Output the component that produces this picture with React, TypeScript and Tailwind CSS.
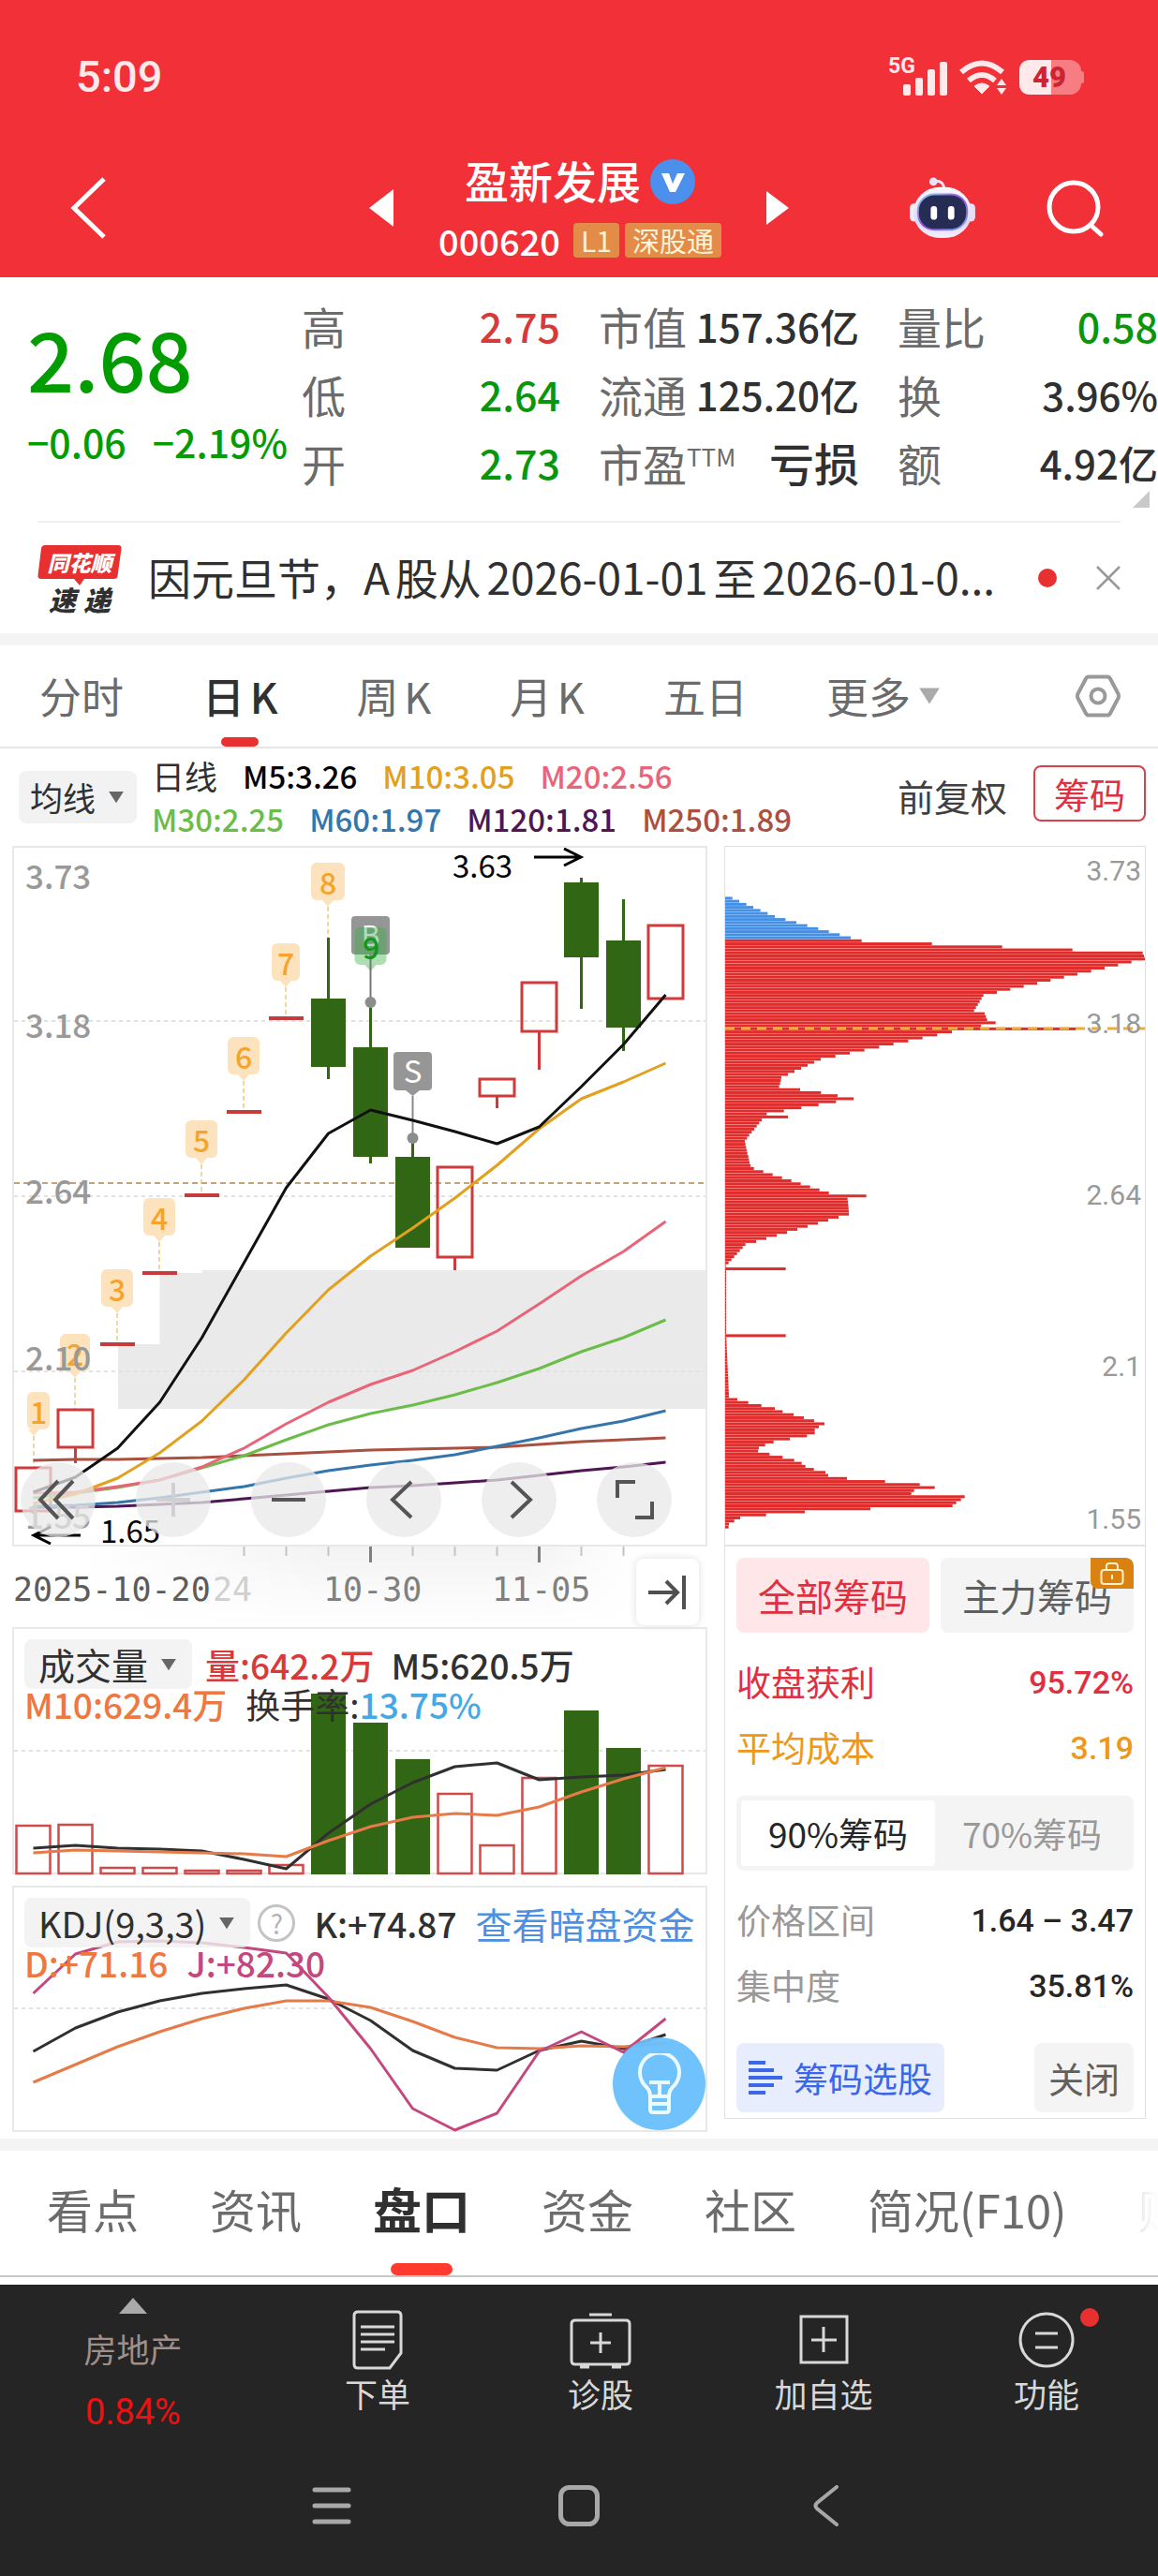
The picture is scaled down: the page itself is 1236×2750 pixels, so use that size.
import type { ReactNode } from "react";

/* ---------- shared helpers ---------- */

const candleX = (i: number) => 35.5 + 45 * i;

const linePoints = (ys: number[]) => ys.map((y, i) => `${candleX(i)},${y}`).join(" ");

function Caret({ className }: { className: string }) {
  return (
    <svg viewBox="0 0 20 16" className={className} aria-hidden="true">
      <path d="M1 1h18l-9 14z" fill="currentColor" />
    </svg>
  );
}

function SeriesLine({ ys, color, width = 3 }: { ys: number[]; color: string; width?: number }) {
  return <polyline points={linePoints(ys)} fill="none" stroke={color} strokeWidth={width} strokeLinejoin="round" />;
}

/* ---------- header ---------- */

function StatusBar() {
  return (
    <div className="flex h-16 items-center justify-between pr-[79px] pl-[81px] text-[#ffe9ea]">
      <span className="font-['Roboto',sans-serif] text-[47px] leading-[48px] font-medium">5:09</span>
      <div className="flex items-center gap-3">
        <svg viewBox="950 58 63 44" className="h-11 w-[63px]" aria-label="5G">
          <text x="950" y="76" fontSize="23" fontWeight="700" fill="currentColor" fontFamily="Roboto, sans-serif">5G</text>
          <g fill="currentColor">
            <rect x="966" y="88" width="8" height="12" rx="2" />
            <rect x="979" y="81" width="8" height="19" rx="2" />
            <rect x="992" y="72" width="8" height="28" rx="2" />
            <rect x="1005" y="64" width="8" height="36" rx="2" />
          </g>
        </svg>
        <svg viewBox="1025 60 52 44" className="h-11 w-[52px]" aria-label="Wi-Fi">
          <g fill="none" stroke="currentColor" strokeWidth="6">
            <path d="M1028 77q22 -19 44 0" />
            <path d="M1036 86q14 -12 28 0" />
          </g>
          <path d="M1042 92q8 -6 16 0l-8 8z" fill="currentColor" stroke="currentColor" strokeLinejoin="round" />
          <path d="M1071 84l5 7h-10zM1071 101l5 -7h-10z" fill="currentColor" />
        </svg>
        <svg viewBox="1087 60 70 44" className="h-11 w-[70px]" aria-label="49%">
          <rect x="1088" y="64" width="66" height="37" rx="12" fill="#f87d82" />
          <rect x="1153" y="76" width="4" height="13" rx="2" fill="#f87d82" />
          <path d="M1100 64h22v37h-22q-12 0 -12 -12v-13q0 -12 12 -12z" fill="currentColor" />
          <text x="1120" y="93" textAnchor="middle" fontSize="31" fontWeight="900" fill="#cc2430" fontFamily="Roboto, sans-serif">49</text>
        </svg>
      </div>
    </div>
  );
}

function Robot() {
  return (
    <svg viewBox="0 0 74 68" className="h-[66px] w-[72px]" aria-hidden="true">
      <defs>
        <linearGradient id="shell" x1="0" y1="0" x2="0" y2="1">
          <stop offset="0" stopColor="#fbf8ff" />
          <stop offset="0.7" stopColor="#dcd9f5" />
          <stop offset="1" stopColor="#f6effb" />
        </linearGradient>
        <linearGradient id="rim" x1="0" y1="0" x2="1" y2="1">
          <stop offset="0" stopColor="#8fd6ee" />
          <stop offset="0.5" stopColor="#8b4be0" />
          <stop offset="1" stopColor="#7fa2ee" />
        </linearGradient>
      </defs>
      <path d="M29 5q9 -2 10 9" fill="none" stroke="#efe6f5" strokeWidth="3" />
      <circle cx="27" cy="5" r="4.5" fill="#e9e2f6" />
      <rect x="1" y="29" width="10" height="20" rx="5" fill="#f2edfa" />
      <rect x="63" y="29" width="10" height="20" rx="5" fill="#e6dff6" />
      <rect x="5" y="11" width="64" height="56" rx="29" fill="url(#shell)" />
      <rect x="10" y="19" width="54" height="39" rx="18" fill="#262d55" stroke="url(#rim)" strokeWidth="2" />
      <rect x="24" y="32" width="7" height="15" rx="3.5" fill="#fff" />
      <rect x="43" y="32" width="7" height="15" rx="3.5" fill="#fff" />
    </svg>
  );
}

function Header() {
  return (
    <header className="bg-[#f23038] pt-[50px] text-white">
      <StatusBar />
      <nav className="mt-[34px] grid h-[148px] grid-cols-[1fr_448px_1fr] items-center">
        <button aria-label="返回" className="ml-[74px] w-10">
          <svg viewBox="0 0 40 66" className="h-[66px] w-10" fill="none" stroke="currentColor" strokeWidth="5">
            <path d="M37 2L5 33l32 31" />
          </svg>
        </button>
        <div className="flex items-center justify-between">
          <button aria-label="上一只">
            <svg viewBox="0 0 26 40" className="h-10 w-[26px]"><path d="M26 0v40L0 20z" fill="currentColor" /></svg>
          </button>
          <div className="flex flex-col items-center gap-4">
            <h1 className="flex items-center gap-2.5 text-[47px] leading-[60px] font-medium">
              <span className="-mt-1">盈新发展</span>
              <svg viewBox="0 0 48 48" className="h-12 w-12" aria-hidden="true">
                <circle cx="24" cy="24" r="24" fill="#4a90ec" />
                <path d="M12 15h8l4 11 5 -11h8l-10 20h-6z" fill="#fff" />
              </svg>
            </h1>
            <div className="flex items-center gap-1.5 pb-1 leading-[37px]">
              <span className="mr-2 text-[38px] font-medium">000620</span>
              <span className="rounded-sm bg-[#e38c4a] px-2 text-[30px] text-[#fff3d8]">L1</span>
              <span className="rounded-sm bg-[#e38c4a] px-2 text-[29px] text-[#fff3d8]">深股通</span>
            </div>
          </div>
          <button aria-label="下一只">
            <svg viewBox="0 0 24 36" className="h-9 w-6"><path d="M0 0v36l24 -18z" fill="currentColor" /></svg>
          </button>
        </div>
        <div className="flex items-center justify-end gap-[75px] pr-[58px]">
          <button aria-label="智能助手"><Robot /></button>
          <button aria-label="搜索">
            <svg viewBox="0 0 61 61" className="h-[61px] w-[61px]" fill="none" stroke="currentColor" strokeWidth="5">
              <circle cx="29" cy="29" r="26" />
              <path d="M48 49l10 9" strokeLinecap="round" />
            </svg>
          </button>
        </div>
      </nav>
    </header>
  );
}

/* ---------- quote ---------- */

type Stat = { label: ReactNode; value: string; tone: string };

function StatColumn({ stats, className }: { stats: Stat[]; className: string }) {
  return (
    <dl className={className}>
      {stats.map((s) => (
        <div key={s.value} className="flex h-[73px] items-center justify-between whitespace-nowrap">
          <dt className="text-[47px] leading-[73px] text-[#6b6b6b]">{s.label}</dt>
          <dd className={s.tone}>{s.value}</dd>
        </div>
      ))}
    </dl>
  );
}

const DARK = "text-[42px] leading-[73px] font-medium text-[#303030]";
const GREEN = "text-[43px] leading-[73px] font-medium text-[#0a960a]";
const RED = "text-[43px] leading-[73px] font-medium text-[#d83a3a]";

function Quote() {
  return (
    <section className="relative grid grid-cols-[322fr_276fr_319fr_319fr] pt-[15px] pb-[26px]">
      <div className="pl-[29px] whitespace-nowrap text-[#009c00]">
        <p className="mt-5 text-[88px] leading-[100px] font-medium">2.68</p>
        <p className="mt-4 flex gap-7 text-[41px] leading-[48px] font-medium">
          <span>−0.06</span>
          <span>−2.19%</span>
        </p>
      </div>
      <StatColumn
        className=""
        stats={[
          { label: "高", value: "2.75", tone: RED },
          { label: "低", value: "2.64", tone: GREEN },
          { label: "开", value: "2.73", tone: GREEN },
        ]}
      />
      <StatColumn
        className="pl-[41px]"
        stats={[
          { label: "市值", value: "157.36亿", tone: DARK },
          { label: "流通", value: "125.20亿", tone: DARK },
          {
            label: <>市盈<span className="align-[16px] text-[26px] leading-none">TTM</span></>,
            value: "亏损",
            tone: "text-[48px] leading-[73px] font-medium text-[#303030]",
          },
        ]}
      />
      <StatColumn
        className="pl-[41px]"
        stats={[
          { label: "量比", value: "0.58", tone: GREEN },
          { label: "换", value: "3.96%", tone: DARK },
          { label: "额", value: "4.92亿", tone: DARK },
        ]}
      />
      <svg viewBox="0 0 18 18" className="absolute right-[9px] bottom-[14px] h-[18px] w-[18px]" aria-hidden="true">
        <path d="M18 0v18H0z" fill="#c9c9c9" />
      </svg>
    </section>
  );
}

function News() {
  return (
    <section className="mx-10 flex h-[120px] items-center border-t-2 border-[#efefef]">
      <div className="flex w-[90px] shrink-0 flex-col items-center italic">
        <div className="relative">
          <svg viewBox="0 0 90 43" className="h-[43px] w-[90px]" aria-hidden="true">
            <path d="M8 0h78q4 0 3.500 4l-4 29q-.5 3 -4 3H50l-5 7 -6 -7H4q-4 0 -3.500 -4L4 3.500Q4.500 0 8 0z" fill="#e93030" />
          </svg>
          <span className="absolute inset-x-0 top-0 text-center text-[23px] leading-9 font-black text-white">同花顺</span>
        </div>
        <span className="flex gap-2 text-[29px] leading-[28px] font-black text-[#303030]">
          <span>速</span>
          <span>递</span>
        </span>
      </div>
      <a href="#news" className="ml-[28px] min-w-0 flex-1 truncate pb-1 text-[46px] leading-[64px] text-[#303030] [text-autospace:normal]">
        因元旦节，A股从2026-01-01至2026-01-0...
      </a>
      <span className="mr-[42px] h-5 w-5 shrink-0 rounded-full bg-[#e93030]" />
      <button aria-label="关闭公告" className="shrink-0">
        <svg viewBox="0 0 26 26" className="h-[26px] w-[26px]" stroke="#999" strokeWidth="2.500">
          <path d="M1 1l24 24M25 1L1 25" />
        </svg>
      </button>
    </section>
  );
}

/* ---------- period tabs and averages ---------- */

function PeriodTabs() {
  const tabs = ["分时", "日K", "周K", "月K", "五日"];
  return (
    <nav className="box-content flex h-[108px] items-stretch border-t-[13px] border-b-2 border-t-[#f4f4f4] border-b-[#e6e6e6] pr-10 pl-[42px] text-[45px] text-[#6b6b6b] [text-autospace:normal]">
      <div className="flex gap-[84px]">
        {tabs.map((t) =>
          t === "日K" ? (
            <button key={t} aria-current="page" className="relative font-medium whitespace-nowrap text-[#303030]">
              {t}
              <span className="absolute bottom-0 left-1/2 -ml-5 h-2.5 w-10 rounded-full bg-[#e93030]" />
            </button>
          ) : (
            <button key={t} className="whitespace-nowrap">{t}</button>
          ),
        )}
        <button className="flex items-center gap-2 whitespace-nowrap">
          更多
          <Caret className="h-5 w-6 text-[#aaa]" />
        </button>
      </div>
      <button aria-label="设置" className="ml-auto">
        <svg viewBox="0 0 48 46" className="h-[46px] w-12" fill="none" stroke="#999" strokeWidth="4">
          <path d="M14 2.500h20q2 0 3 2l8.500 16q1 2.500 0 5l-8.500 16q-1 2 -3 2H14q-2 0 -3 -2L2.500 25.500q-1 -2.500 0 -5l8.500 -16q1 -2 3 -2z" />
          <circle cx="24" cy="23" r="7.500" />
        </svg>
      </button>
    </nav>
  );
}

function Averages() {
  return (
    <div className="flex h-[104px] items-center pr-[13px] pl-5">
      <button className="flex h-14 shrink-0 items-center gap-3 rounded-lg bg-[#f2f2f2] px-3 text-[35px] leading-[56px] text-[#303030]">
        均线
        <Caret className="h-3.5 w-5 text-[#666]" />
      </button>
      <div className="ml-4 flex-1 text-[33px] leading-[46px] font-medium whitespace-nowrap">
        <p className="flex gap-[27px]">
          <span className="text-[35px] font-normal text-[#303030]">日线</span>
          <span className="text-black">M5:3.26</span>
          <span className="text-[#e2a01e]">M10:3.05</span>
          <span className="text-[#ea6478]">M20:2.56</span>
        </p>
        <p className="flex gap-[27px]">
          <span className="text-[#6cbc4a]">M30:2.25</span>
          <span className="text-[#3476ab]">M60:1.97</span>
          <span className="text-[#4f1654]">M120:1.81</span>
          <span className="text-[#aa5040]">M250:1.89</span>
        </p>
      </div>
      <button className="mr-7 pb-1 text-[39px] leading-[60px] whitespace-nowrap text-[#404040]">前复权</button>
      <button className="mb-2 h-[60px] w-[120px] rounded-lg border-2 border-[#d8404a] text-[38px] leading-[54px] text-[#e02f40]">筹码</button>
    </div>
  );
}

/* ---------- candlestick chart ---------- */

type Candle = { i: number; top: number; bottom: number; high?: number; low?: number; up?: boolean };

const candles: Candle[] = [
  { i: 0, top: 1567, bottom: 1613, low: 1616, up: true },
  { i: 1, top: 1505, bottom: 1545, low: 1562, up: true },
  { i: 7, top: 1066, bottom: 1139, high: 1001, low: 1152 },
  { i: 8, top: 1118, bottom: 1235, high: 1070, low: 1242 },
  { i: 9, top: 1235, bottom: 1332, high: 1215, low: 1332 },
  { i: 10, top: 1246, bottom: 1342, low: 1356, up: true },
  { i: 11, top: 1152, bottom: 1170, low: 1183, up: true },
  { i: 12, top: 1049, bottom: 1101, low: 1142, up: true },
  { i: 13, top: 942, bottom: 1022, high: 937, low: 1077 },
  { i: 14, top: 1004, bottom: 1097, high: 960, low: 1122 },
  { i: 15, top: 988, bottom: 1066, up: true },
];

const limitUps = [
  { i: 2, y: 1435 },
  { i: 3, y: 1359 },
  { i: 4, y: 1276 },
  { i: 5, y: 1187 },
  { i: 6, y: 1087 },
];

const countTags = [
  { n: 1, x: 41, tip: 36, top: 1486, end: 1567, w: 24 },
  { n: 2, x: 80, tip: 80, top: 1424, end: 1505, w: 32 },
  { n: 3, x: 125, tip: 125, top: 1355, end: 1435, w: 34 },
  { n: 4, x: 170, tip: 170, top: 1279, end: 1359, w: 34 },
  { n: 5, x: 215, tip: 215, top: 1196, end: 1276, w: 34 },
  { n: 6, x: 260, tip: 260, top: 1107, end: 1187, w: 34 },
  { n: 7, x: 305, tip: 305, top: 1007, end: 1087, w: 30 },
  { n: 8, x: 350, tip: 350, top: 921, end: 1001, w: 36 },
];

const GREEN_FILL = "#306614";
const RED_LINE = "#d03a3a";

function KLineChart() {
  const controls: { label: string; icon: ReactNode }[] = [
    { label: "展开", icon: <path d="M24 -19L5 1l19 20M40 -19L21 1l19 20" transform="translate(-24 -1)" /> },
    { label: "放大", icon: <path d="M-18 0h36M0 -18v36" stroke="#d0d0d0" /> },
    { label: "缩小", icon: <path d="M-18 0h36" /> },
    { label: "左移", icon: <path d="M8 -19L-12 0l20 19" /> },
    { label: "右移", icon: <path d="M-8 -19L12 0l-20 19" /> },
    { label: "全屏", icon: <path d="M-18 -2v-17h19M19 2v17h-18" /> },
  ];
  return (
    <div className="relative border-2 border-[#e8e8e8]">
      <svg viewBox="15 905 738 744" className="block h-auto w-full" aria-label="日K线图">
        <path d="M126 1435h44.500v-76h45v-3H753v148H126z" fill="#eaeaea" />
        <g stroke="#e2e2e2" strokeWidth="2" strokeDasharray="4 4">
          <path d="M15 1090H753M15 1277H753M15 1464H753" />
        </g>
        <path d="M15 1263H753" stroke="#c3a477" strokeWidth="2" strokeDasharray="6 4" />

        {countTags.map((t) => (
          <g key={t.n}>
            <rect x={t.x - t.w / 2} y={t.top} width={t.w} height="40" rx="6" fill="#fde3bd" />
            <path d={`M${t.tip - 6} ${t.top + 40}h12l-6 7z`} fill="#fde3bd" />
            <path d={`M${t.tip} ${t.top + 47}V${t.end}`} stroke="#d9b24c" strokeDasharray="5 3" />
            <text x={t.x} y={t.top + 34} textAnchor="middle" fontSize="32" fontWeight="500" fill="#f5a32a">{t.n}</text>
          </g>
        ))}

        {limitUps.map((l) => (
          <rect key={l.i} x={candleX(l.i) - 18.5} y={l.y - 2} width="37" height="4" fill="#c63c3c" />
        ))}
        {candles.map((c) => {
          const x = candleX(c.i);
          return c.up ? (
            <g key={c.i} stroke={RED_LINE} fill="none">
              <rect x={x - 18.5} y={c.top} width="37" height={c.bottom - c.top} strokeWidth="3" />
              {c.low && <path d={`M${x} ${c.bottom}V${c.low}`} strokeWidth="3" />}
            </g>
          ) : (
            <g key={c.i} fill={GREEN_FILL}>
              <rect x={x - 18.5} y={c.top} width="37" height={c.bottom - c.top} />
              <rect x={x - 1.5} y={c.high} width="3" height={(c.low ?? c.bottom) - (c.high ?? c.top)} />
            </g>
          );
        })}

        <g>
          <rect x="375" y="978" width="41" height="41" rx="4" fill="#969696" />
          <text x="395.500" y="1010" textAnchor="middle" fontSize="30" fill="#fff">B</text>
          <rect x="378.500" y="990" width="34" height="40" rx="6" fill="#2fae3c" fillOpacity="0.4" />
          <path d="M389.500 1030h12l-6 7z" fill="#a9dcae" />
          <path d="M395.500 1019V1070" stroke="#777" strokeWidth="2" />
          <circle cx="395.500" cy="1070" r="6" fill="#8c8c8c" />
          <text x="396" y="1024" textAnchor="middle" fontSize="32" fontWeight="500" fill="#12961c">9</text>
          <rect x="420" y="1123" width="41" height="41" rx="4" fill="#969696" />
          <path d="M433 1164h15l-7.500 6z" fill="#969696" />
          <text x="440.500" y="1156" textAnchor="middle" fontSize="33" fill="#fff">S</text>
          <path d="M440.500 1170V1215" stroke="#888" strokeWidth="2" />
          <circle cx="440.500" cy="1215" r="6" fill="#8c8c8c" />
        </g>

        <SeriesLine color="#aa5040" ys={[1559, 1558, 1558, 1557, 1556, 1554, 1552, 1550, 1548, 1547, 1546, 1545, 1542, 1539, 1537, 1535]} />
        <SeriesLine color="#4f1654" ys={[1609, 1609, 1608, 1606, 1604, 1600, 1596, 1592, 1588, 1586, 1583, 1580, 1575, 1570, 1566, 1561]} />
        <SeriesLine color="#3476ab" ys={[1608, 1607, 1604, 1599, 1593, 1587, 1578, 1570, 1564, 1559, 1553, 1544, 1535, 1525, 1517, 1506]} />
        <SeriesLine color="#6cbc4a" ys={[1599, 1594, 1588, 1580, 1567, 1554, 1537, 1521, 1509, 1500, 1489, 1476, 1461, 1443, 1428, 1409]} />
        <SeriesLine color="#ea6478" ys={[1594, 1593, 1587, 1580, 1566, 1546, 1520, 1497, 1478, 1463, 1443, 1421, 1392, 1362, 1336, 1304]} />
        <SeriesLine color="#e2a01e" ys={[1605, 1595, 1578, 1551, 1517, 1473, 1423, 1377, 1341, 1311, 1279, 1244, 1205, 1173, 1155, 1135]} />
        <SeriesLine color="#111" ys={[1593, 1577, 1546, 1497, 1428, 1348, 1268, 1210, 1185, 1196, 1208, 1221, 1203, 1160, 1115, 1062]} />

        <g fontSize="35" fontWeight="500" fill="#999">
          <text x="27" y="949">3.73</text>
          <text x="27" y="1108">3.18</text>
          <text x="27" y="1285">2.64</text>
          <text x="27" y="1463">2.10</text>
          <text x="27" y="1632">1.55</text>
        </g>
        <g fontSize="33" fill="#000">
          <text x="483" y="937">3.63</text>
          <text x="107" y="1647">1.65</text>
        </g>
        <g fill="none" stroke="#000" strokeWidth="3">
          <path d="M570 915h50M602 906l18 9 -18 9" />
          <path d="M86 1639H36M54 1630l-18 9 18 9" />
        </g>
      </svg>
      <div className="absolute inset-x-0 bottom-2 flex justify-between pr-9 pl-[7px]">
        {controls.map((c) => (
          <button key={c.label} aria-label={c.label} className="flex h-20 w-20 items-center justify-center rounded-full bg-[#e8e8e8]/75">
            <svg viewBox="-24 -24 48 48" className="h-12 w-12" fill="none" stroke="#555" strokeWidth="4">{c.icon}</svg>
          </button>
        ))}
      </div>
    </div>
  );
}

function DateAxis() {
  return (
    <div className="relative">
      <svg viewBox="13 1651 742 86" className="block h-auto w-full" aria-label="日期">
        <defs>
          <linearGradient id="fog" x1="0" y1="0" x2="1" y2="0">
            <stop offset="0.1" stopColor="#fff" />
            <stop offset="0.450" stopColor="#f3f3f3" />
            <stop offset="0.750" stopColor="#f3f3f3" />
            <stop offset="0.900" stopColor="#fff" />
          </linearGradient>
          <linearGradient id="fogFade" x1="0" y1="0" x2="0" y2="1">
            <stop offset="0" stopColor="#fff" stopOpacity="0" />
            <stop offset="1" stopColor="#fff" />
          </linearGradient>
        </defs>
        <rect x="13" y="1651" width="742" height="86" fill="url(#fog)" />
        <rect x="13" y="1651" width="742" height="86" fill="url(#fogFade)" />
        {[5, 6, 7, 9, 10, 11, 13, 14].map((i) => (
          <rect key={i} x={candleX(i) - 1} y="1651" width="2" height="10" fill="#c4c4c4" />
        ))}
        {[8, 12].map((i) => (
          <rect key={i} x={candleX(i) - 1.5} y="1651" width="3" height="17" fill="#808080" />
        ))}
        <g fontSize="35" fontFamily="'DejaVu Sans Mono', monospace" fill="#808080">
          <text x="14" y="1709" fill="#5c5c5c">2025-10-20</text>
          <text x="227" y="1709" fill="#d0d0d0">24</text>
          <text x="345" y="1709">10-30</text>
          <text x="525" y="1709">11-05</text>
        </g>
      </svg>
      <button aria-label="跳到最新" className="absolute right-[9px] bottom-0.5 flex h-[71px] w-[67px] items-center justify-center rounded-lg bg-white shadow-[0_0_8px_#0002]">
        <svg viewBox="0 0 42 38" className="h-[38px] w-[42px]" fill="none" stroke="#505050" strokeWidth="4">
          <path d="M0 19h31M19 7l12 12 -12 12M38 1v36" />
        </svg>
      </button>
    </div>
  );
}

/* ---------- volume ---------- */

const volumes = [
  { y: 1949 }, { y: 1948 }, { y: 1994 }, { y: 1994 }, { y: 1997 }, { y: 1997 }, { y: 1991 },
  { y: 1808, down: true }, { y: 1839, down: true }, { y: 1878, down: true },
  { y: 1915 }, { y: 1970 }, { y: 1898 },
  { y: 1826, down: true }, { y: 1866, down: true }, { y: 1885 },
];

function Volume() {
  return (
    <div className="relative border-2 border-[#e8e8e8]">
      <svg viewBox="15 1739 738 260" className="block h-auto w-full overflow-visible" aria-label="成交量图">
        <path d="M15 1869H753" stroke="#e2e2e2" strokeWidth="2" strokeDasharray="4 4" />
        {volumes.map((v, i) =>
          v.down ? (
            <rect key={i} x={candleX(i) - 18.5} y={v.y} width="37" height={2001 - v.y} fill={GREEN_FILL} />
          ) : (
            <rect key={i} x={candleX(i) - 18} y={v.y} width="36" height={2000 - v.y} fill="none" stroke="#d14a4a" strokeWidth="2.500" />
          ),
        )}
        <SeriesLine color="#303030" ys={[1973, 1970, 1973, 1974, 1976, 1985, 1995, 1957, 1926, 1903, 1886, 1882, 1900, 1897, 1895, 1889]} />
        <SeriesLine color="#e67a48" ys={[1978, 1975, 1976, 1977, 1978, 1979, 1982, 1965, 1950, 1940, 1936, 1938, 1929, 1913, 1899, 1887]} />
      </svg>
      <div className="absolute inset-x-0 top-[11px] pl-[11px] text-[37px] font-medium whitespace-nowrap text-[#303030]">
        <div className="flex items-center gap-3.5 leading-[50px]">
          <button className="flex items-center gap-3 rounded-lg bg-[#f0f0f0]/80 px-[15px] text-[39px] leading-[53px] font-normal">
            成交量
            <Caret className="h-3.5 w-5 text-[#666]" />
          </button>
          <span className="text-[#d83a3a]">量:642.2万</span>
          <span className="ml-1">M5:620.5万</span>
        </div>
        <div className="flex gap-5 leading-[32px]">
          <span className="text-[#ee7840]">M10:629.4万</span>
          <span className="font-normal">换手率:<span className="font-medium text-[#45a8e6]">13.75%</span></span>
        </div>
      </div>
    </div>
  );
}

/* ---------- KDJ ---------- */

function Kdj() {
  return (
    <div className="relative mt-3 border-2 border-[#e8e8e8]">
      <svg viewBox="15 2016 738 259" className="block h-auto w-full overflow-visible" aria-label="KDJ图">
        <path d="M15 2145H753" stroke="#e2e2e2" strokeWidth="2" strokeDasharray="4 4" />
        <SeriesLine color="#303030" ys={[2191, 2166, 2149, 2137, 2129, 2124, 2120, 2135, 2158, 2190, 2209, 2211, 2190, 2180, 2188, 2173]} />
        <SeriesLine color="#e67a48" ys={[2224, 2205, 2186, 2170, 2156, 2145, 2137, 2137, 2144, 2159, 2176, 2187, 2188, 2185, 2186, 2182]} />
        <SeriesLine color="#c4477e" ys={[2129, 2087, 2074, 2073, 2075, 2080, 2086, 2133, 2188, 2252, 2275, 2257, 2191, 2170, 2192, 2156]} />
      </svg>
      <div className="absolute inset-x-0 top-[11px] pl-[11px] text-[37px] font-medium whitespace-nowrap text-[#303030]">
        <div className="flex items-center leading-[50px]">
          <button className="flex items-center gap-3 rounded-lg bg-[#f0f0f0]/80 px-[15px] text-[38px] leading-[53px] font-normal">
            KDJ(9,3,3)
            <Caret className="h-3.5 w-5 text-[#666]" />
          </button>
          <button aria-label="说明" className="ml-2 h-10 w-10 rounded-full border-3 border-[#c4c4c4] text-[28px] leading-[32px] font-normal text-[#b4b4b4]">?</button>
          <span className="ml-5">K:+74.87</span>
          <a href="#funds" className="ml-5 text-[39px] font-normal text-[#4d8fe0]">查看暗盘资金</a>
        </div>
        <div className="flex gap-5 leading-[32px]">
          <span className="text-[#ee7840]">D:+71.16</span>
          <span className="text-[#c4477e]">J:+82.30</span>
        </div>
      </div>
      <button aria-label="提示" className="absolute right-0 bottom-0 flex h-[99px] w-[99px] items-center justify-center rounded-full bg-[#68bffc]/95">
        <svg viewBox="0 0 50 66" className="h-[66px] w-[50px]" fill="none" stroke="#eafaff" strokeWidth="4" strokeLinejoin="round">
          <path d="M15 46q0 -7 -6 -12a21 21 0 1 1 32 0q-6 5 -6 12zM15 46v14q0 3 3 3h14q3 0 3 -3V46M15 54h20M25 46V31M14 31h22" />
        </svg>
      </button>
    </div>
  );
}

/* ---------- chip distribution ---------- */

const flat = (from: number, to: number, n: number) =>
  Array.from({ length: n }, (_, k) => from + ((to - from) * k) / (n - 1));

/* right edge of every price level, top to bottom, in thirds of a unit */
const chipEdges = [
  65, 87, 110, 132, 155, 178, 201, 235, 270, 305, 340, 374, 409, 444,
  479, 704, 929, 1154, 1379, 1383, 1386, 1343, 1300, 1257, 1214, 1170, 1127, 1084, 1041, 998, 955, 912,
  869, 863, 857, 851, 845, 839, 873, 877, 881, 908, 861, 1165, 768, 721, 674, 628, 581, 535, 488, 441, 395,
  348, 327, 306, 285, 264, 243, 222, 220, 218, 215, 282, 349, 402, 453, 397, 341, 286, 230, 175, 243,
  159, 151, 143, 135, 127, 119, 112, 105, 107, 109, 111, 113, 116, 118, 120, 123,
  134, 164, 194, 224, 254, 284, 314, 344, 374, 494, 434, 435, 436, 437, 438, 438,
  405, 372, 339, 306, 273, 240, 207, 174, 141, 107, 98, 89, 80, 71, 62, 53, 44, 236,
  ...flat(45, 45, 21), 236, ...flat(46, 54, 20),
  81, 116, 158, 201, 226, 261, 294, 327, 360, 342, 329, 329, 304, 249, 197, 170, 150, 147,
  184, 226, 263, 287, 299, 326, 363, 372, 432, 554, 665, 713, 647, 638, 809, 797, 782, 770,
  507, 297, 173, 90, 71, 54, 53,
];

function ChipChart() {
  return (
    <svg viewBox="774 904 448 745" className="block h-auto w-full" aria-label="筹码分布">
      {chipEdges.map((edge, k) => (
        <rect key={k} x="774" y={957.4 + k * 3.243} width={(edge - 42) / 3} height="3" fill={k < 14 ? "#4490e6" : "#e22c2c"} />
      ))}
      <path d="M774 1098H1222" stroke="#f0ab35" strokeWidth="3" strokeDasharray="10 7" />
      <g fontSize="30" fill="#999" textAnchor="end" fontFamily="Roboto, sans-serif">
        <text x="1218" y="940">3.73</text>
        <text x="1218" y="1103">3.18</text>
        <text x="1218" y="1286">2.64</text>
        <text x="1218" y="1469">2.1</text>
        <text x="1218" y="1632">1.55</text>
      </g>
    </svg>
  );
}

function ChipRow({ label, value, labelTone, valueTone }: { label: string; value: string; labelTone: string; valueTone: string }) {
  return (
    <div className="flex h-[70px] items-center justify-between whitespace-nowrap">
      <dt className={labelTone}>{label}</dt>
      <dd className={valueTone}>{value}</dd>
    </div>
  );
}

function ChipPanel() {
  return (
    <aside className="self-start border border-[#e0e0e0]">
      <ChipChart />
      <div className="border-t-2 border-[#e4e4e4] px-3 pt-3 pb-1.5">
        <div className="grid grid-cols-2 gap-3 text-[40px] leading-[76px] whitespace-nowrap">
          <button className="h-20 rounded-lg bg-[#ffe7e9] text-[#e02f40]">全部筹码</button>
          <button className="relative h-20 overflow-hidden rounded-lg bg-[#f4f4f4] text-[#606060]">
            主力筹码
            <span className="absolute top-0 right-0 flex h-[33px] w-[46px] items-center justify-center rounded-tr-lg rounded-bl-lg bg-[#d9820f]">
              <svg viewBox="0 0 26 26" className="h-[26px] w-[26px]" fill="none" stroke="#fff0c8" strokeWidth="2">
                <rect x="1.500" y="9" width="23" height="15" rx="3" />
                <path d="M7 9V5q0 -3 3 -3h6q3 0 3 3v4M13 14v5" />
              </svg>
            </span>
          </button>
        </div>
        <dl className="mt-[18px]">
          <ChipRow label="收盘获利" value="95.72%" labelTone="text-[37px] text-[#e02f40]" valueTone="font-['Roboto',sans-serif] text-[34px] font-medium text-[#e02f40]" />
          <ChipRow label="平均成本" value="3.19" labelTone="text-[37px] text-[#ee9718]" valueTone="font-['Roboto',sans-serif] text-[34px] font-medium text-[#ee9718]" />
        </dl>
        <div className="mt-4 grid h-20 grid-cols-2 rounded-lg bg-[#f4f4f4] p-[5px] text-[37px] leading-[66px] whitespace-nowrap">
          <button aria-pressed="true" className="rounded bg-white text-[#262626]">90%筹码</button>
          <button aria-pressed="false" className="text-[#999]">70%筹码</button>
        </div>
        <dl className="mt-[18px]">
          <ChipRow label="价格区间" value="1.64 – 3.47" labelTone="text-[37px] text-[#999]" valueTone="font-['Roboto',sans-serif] text-[34px] font-medium text-[#262626]" />
          <ChipRow label="集中度" value="35.81%" labelTone="text-[37px] text-[#999]" valueTone="font-['Roboto',sans-serif] text-[34px] font-medium text-[#262626]" />
        </dl>
        <div className="mt-[26px] flex justify-between leading-[70px] whitespace-nowrap">
          <button className="flex h-[74px] items-center gap-3 rounded-lg bg-[#e8edfd] px-[13px] text-[37px] text-[#3b66e8]">
            <svg viewBox="0 0 36 36" className="h-9 w-9" fill="currentColor" aria-hidden="true">
              <path d="M0 0h18v4H0zM0 8h27v4H0zM0 16h36v4H0zM0 24h27v4H0zM0 32h18v4H0z" />
            </svg>
            筹码选股
          </button>
          <button className="h-[74px] w-[106px] rounded-lg bg-[#f4f4f4] text-[38px] text-[#606060]">关闭</button>
        </div>
      </div>
    </aside>
  );
}

/* ---------- footer ---------- */

function DetailTabs() {
  return (
    <nav className="relative mt-[7px] h-[148px] overflow-hidden border-t-[13px] border-b-2 border-t-[#f4f4f4] border-b-[#c8c8c8]">
      <div className="flex h-full gap-[76px] pl-[50px] text-[49px] leading-[124px] whitespace-nowrap text-[#6b6b6b] *:flex">
        <button>看点</button>
        <button>资讯</button>
        <button aria-current="page" className="relative text-[52px] font-bold text-[#303030]">
          盘口
          <span className="absolute bottom-0 left-1/2 -ml-[33px] h-[13px] w-[66px] rounded-full bg-[#ff3b30]" />
        </button>
        <button>资金</button>
        <button>社区</button>
        <button>简况(F10)</button>
        <button>财务</button>
      </div>
      <div className="pointer-events-none absolute inset-y-0 right-0 w-14 bg-linear-to-r from-white/60 to-white" />
    </nav>
  );
}

const footerItems: { label: string; dot?: boolean; icon: ReactNode }[] = [
  {
    label: "下单",
    icon: (
      <path d="M8 2h42q4 0 4 4v40L42 62H8q-4 0 -4 -4V6q0 -4 4 -4zM11 18h36M11 26h36M11 34h36M11 42h26" transform="translate(3)" />
    ),
  },
  {
    label: "诊股",
    icon: <path d="M5 11h54q4 0 4 4v39q0 4 -4 4H5q-4 0 -4 -4V15q0 -4 4 -4zM20 5h24M32 24v22M21 35h22M10 61h10M44 61h10" />,
  },
  { label: "加自选", icon: <path d="M8 7h49v49H8zM32 18v27M19 32h27" /> },
  { label: "功能", dot: true, icon: <path d="M32 4a28 28 0 1 0 .1 0zM20 25h24M20 40h24" /> },
];

function BottomBar() {
  return (
    <footer className="mt-2 flex-1 bg-[#252525] pb-12 text-[#d8d8d8]">
      <nav className="grid grid-cols-[284fr_238fr_238fr_238fr_238fr] whitespace-nowrap">
        <button className="flex flex-col items-center pt-3.5 text-[#9f8f8b]">
          <svg viewBox="0 0 30 17" className="h-[17px] w-[30px]" aria-hidden="true"><path d="M15 0l15 17H0z" fill="#aaa" /></svg>
          <span className="mt-3 text-[35px] leading-[50px]">房地产</span>
          <span className="mt-[18px] font-['Roboto',sans-serif] text-[38px] leading-[50px] text-[#ee1111]">0.84%</span>
        </button>
        {footerItems.map((f) => (
          <button key={f.label} className="flex flex-col items-center pt-[27px]">
            <span className="relative">
              <svg viewBox="0 0 64 64" className="h-16 w-16 overflow-visible" fill="none" stroke="currentColor" strokeWidth="3">{f.icon}</svg>
              {f.dot && <span className="absolute -top-0.5 -right-6 h-5 w-5 rounded-full bg-[#e93030]" />}
            </span>
            <span className="mt-0.5 text-[35px] leading-[46px]">{f.label}</span>
          </button>
        ))}
      </nav>
      <nav className="mt-[53px] grid grid-cols-[1fr_0px_264px_264px_0px_1fr] items-center text-[#a8a8a8]">
        <span />
        <button aria-label="最近任务" className="flex justify-center">
          <svg viewBox="0 0 42 44" className="h-11 w-[42px] shrink-0" stroke="currentColor" strokeWidth="5" strokeLinecap="round">
            <path d="M3 5h36M3 22h36M3 39h36" />
          </svg>
        </button>
        <button aria-label="主屏幕" className="col-span-2 flex justify-center">
          <svg viewBox="0 0 44 44" className="h-11 w-11" fill="none" stroke="currentColor" strokeWidth="5">
            <rect x="2.500" y="2.500" width="39" height="39" rx="9" />
          </svg>
        </button>
        <button aria-label="后退" className="flex justify-center">
          <svg viewBox="0 0 28 44" className="h-11 w-7 shrink-0" fill="none" stroke="currentColor" strokeWidth="4" strokeLinecap="round">
            <path d="M25 2L4 19q-3 3 0 6l21 17" />
          </svg>
        </button>
        <span />
      </nav>
    </footer>
  );
}

export default function App() {
  return (
    <div className="flex min-h-screen flex-col overflow-x-hidden bg-white font-['Noto_Sans_CJK_SC',sans-serif]">
      <Header />
      <Quote />
      <News />
      <PeriodTabs />
      <Averages />
      <main className="grid grid-cols-[742fr_450fr] gap-[18px] px-[13px]">
        <div>
          <KLineChart />
          <DateAxis />
          <Volume />
          <Kdj />
        </div>
        <ChipPanel />
      </main>
      <DetailTabs />
      <BottomBar />
    </div>
  );
}
